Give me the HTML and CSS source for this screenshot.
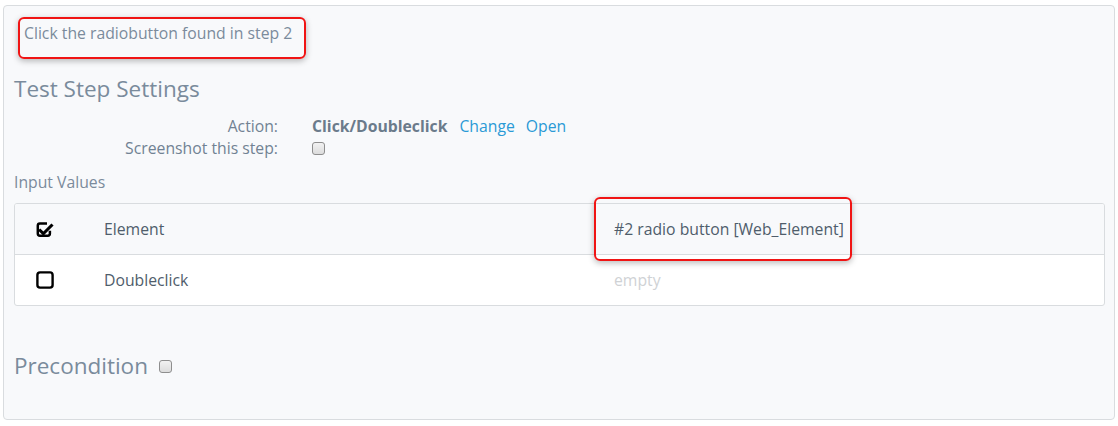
FILE: index.html
```html
<!DOCTYPE html>
<html>
<head>
<meta charset="utf-8">
<link rel="stylesheet" href="styles.css">
</head>
<body>
<div class="panel">
  <p class="desc">Click the radiobutton found in step 2</p>
  <h2 class="title">Test Step Settings</h2>
  <div class="form">
    <div class="label">Action:</div>
    <div class="value"><b class="action">Click/Doubleclick</b><a class="link">Change</a><a class="link">Open</a></div>
    <div class="label">Screenshot this step:</div>
    <div class="value"><span class="box"></span></div>
  </div>
  <div class="sub">Input Values</div>
  <div class="table">
    <div class="row shaded">
      <div class="chk">
        <svg width="18" height="18" viewBox="0 0 18 18"><path d="M11 3.6H3.9Q1.8 3.6 1.8 5.7V13.6Q1.8 15.7 3.9 15.7H11.8Q13.9 15.7 13.9 13.6V10.8" fill="none" stroke="#000" stroke-width="2.5"/><path d="M4.2 8.4L7.4 11.6L15.4 3.4L17.6 5.6L7.4 15.8L2 10.6Z" fill="#000"/></svg>
      </div>
      <div class="name">Element</div>
      <div class="val">#2 radio button [Web_Element]</div>
    </div>
    <div class="row">
      <div class="chk">
        <svg width="18" height="18" viewBox="0 0 18 18"><rect x="1.4" y="1.4" width="15.2" height="15.2" rx="2.6" fill="none" stroke="#000" stroke-width="2.4"/></svg>
      </div>
      <div class="name">Doubleclick</div>
      <div class="val empty">empty</div>
    </div>
  </div>
  <h2 class="title pre">Precondition <span class="box"></span></h2>
  <div class="mark mark1"></div>
  <div class="mark mark2"></div>
</div>
</body>
</html>
```

FILE: styles.css
```css
html, body {
  margin: 0;
  padding: 0;
  background: #ffffff;
  font-family: "Open Sans", "Liberation Sans", sans-serif;
}
.panel {
  position: relative;
  margin: 5px 0 0 3px;
  width: 1091px;
  height: 413px;
  border: 1px solid #d9dcdf;
  border-radius: 4px;
  background: #f8f9fb;
  padding: 0 9px 0 10px;
  box-sizing: content-box;
}
.desc {
  margin: 0;
  padding: 17px 0 0 10px;
  font-size: 15.75px;
  line-height: 20px;
  color: #7b8b9c;
}
.title {
  margin: 33px 0 0 0;
  font-size: 22.5px;
  font-weight: 400;
  line-height: 26px;
  color: #7a8b9c;
}
.form {
  display: grid;
  grid-template-columns: 264px auto;
  column-gap: 34px;
  margin-top: 13px;
  font-size: 15.75px;
  line-height: 22px;
  color: #718293;
}
.label {
  text-align: right;
}
.value {
  display: flex;
  align-items: center;
}
.action {
  font-weight: 700;
  color: #6b7b8b;
  margin-right: 12px;
}
.link {
  color: #2a9ad6;
  margin-right: 11px;
}
.box {
  display: inline-block;
  width: 11px;
  height: 11px;
  border: 1px solid #8e8e8e;
  border-radius: 3px;
  background: linear-gradient(#f2f2f2, #dcdcdc);
}
.sub {
  margin-top: 13px;
  font-size: 15.75px;
  line-height: 20px;
  color: #7b8b9c;
}
.table {
  margin-top: 11px;
  border: 1px solid #d9dcdf;
  border-radius: 3px;
  background: #ffffff;
  overflow: hidden;
}
.row {
  display: grid;
  grid-template-columns: 89px 510px 1fr;
  align-items: center;
  height: 50px;
  font-size: 15.75px;
  color: #4f5d6b;
}
.row + .row {
  border-top: 1px solid #d9dcdf;
}
.shaded {
  background: #f8f9fb;
}
.chk {
  padding-left: 21px;
  display: flex;
  align-items: center;
}
.empty {
  color: #cfd2d5;
}
.pre {
  margin-top: 47px;
  display: flex;
  align-items: center;
  gap: 11px;
}
.mark {
  position: absolute;
  border: 2px solid #f01414;
  border-radius: 6px;
  box-shadow: 0 2px 6px rgba(0, 0, 0, 0.28);
  box-sizing: border-box;
}
.mark1 {
  left: 14px;
  top: 11px;
  width: 288px;
  height: 42px;
}
.mark2 {
  left: 590px;
  top: 191px;
  width: 258px;
  height: 64px;
}
```
